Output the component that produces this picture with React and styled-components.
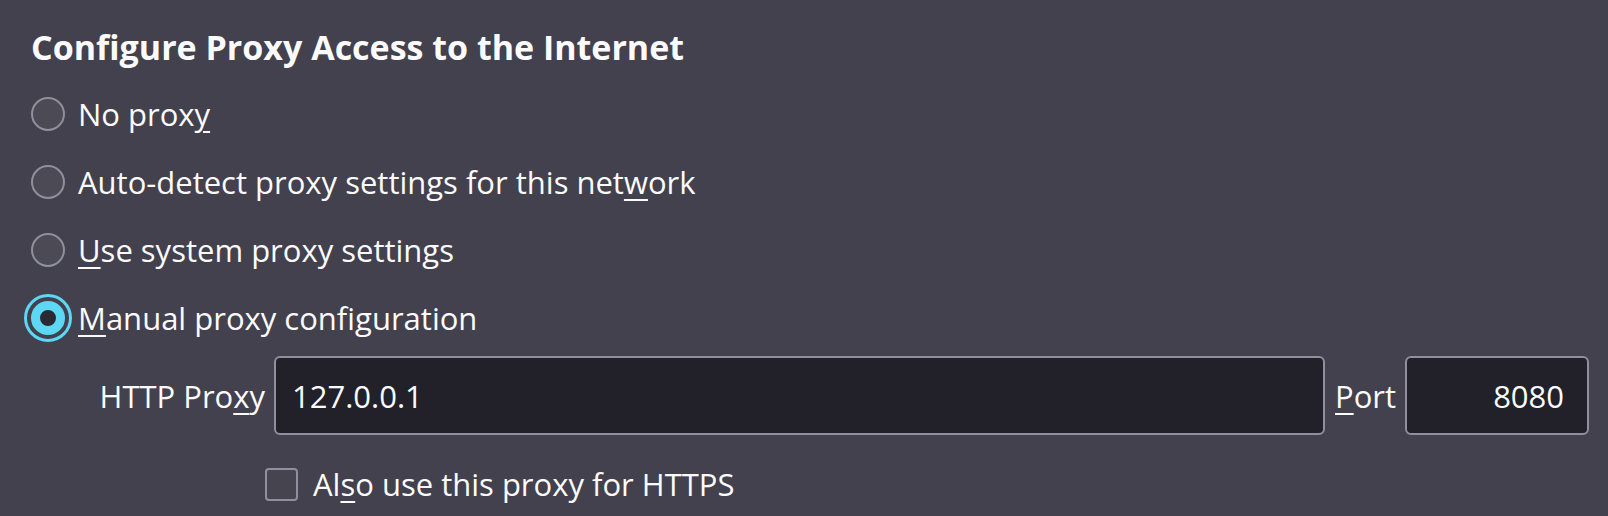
import styled, { createGlobalStyle, css } from "styled-components";

const GlobalStyle = createGlobalStyle`
  html, body {
    margin: 0;
    padding: 0;
    background: #42414d;
  }
  body {
    font-family: "Open Sans", "Noto Sans", sans-serif;
    color: #fbfbfe;
  }
`;

const accent = "#5cd7f4";

const Page = styled.div`
  width: 1608px;
  height: 516px;
  box-sizing: border-box;
  padding: 20px 22px 0 31px;
  background: #42414d;
  overflow: hidden;
`;

const Heading = styled.h1`
  margin: 0;
  height: 60px;
  line-height: 54px;
  font-size: 34px;
  font-weight: 700;
  color: #fbfbfe;
`;

const RadioGroup = styled.div`
  display: flex;
  flex-direction: column;
`;

const RadioRow = styled.label`
  display: flex;
  align-items: center;
  gap: 13px;
  height: 68px;
  font-size: 31px;
`;

const RadioDot = styled.span`
  box-sizing: border-box;
  width: 34px;
  height: 34px;
  flex: none;
  border-radius: 50%;
  border: 2px solid #8f8f9d;
  background: #4b4a55;
  ${(p) =>
    p.$checked &&
    css`
      border: 9px solid ${accent};
      background: #2b2a33;
      outline: 3px solid ${accent};
      outline-offset: 4px;
    `}
`;

const Key = styled.span`
  text-decoration: underline;
  text-decoration-thickness: 2px;
  text-underline-offset: 5px;
`;

const ProxyRow = styled.div`
  display: flex;
  align-items: center;
  margin-top: 4px;
  height: 79px;
  font-size: 31px;
`;

const FieldLabel = styled.span`
  flex: none;
  width: ${(p) => p.$width || "auto"};
  text-align: right;
  margin-right: 9px;
  margin-left: ${(p) => p.$ml || "0"};
`;

const Field = styled.div`
  box-sizing: border-box;
  height: 79px;
  display: flex;
  align-items: center;
  justify-content: ${(p) => (p.$right ? "flex-end" : "flex-start")};
  padding: 0 ${(p) => (p.$right ? "23px" : "20px")} 0 16px;
  width: ${(p) => p.$width};
  flex: none;
  background: #22212a;
  border: 2px solid #8f8f9d;
  border-radius: 6px;
  color: #fbfbfe;
  font-size: 31px;
`;

const CheckRow = styled.label`
  display: flex;
  align-items: center;
  gap: 15px;
  margin-top: 28px;
  padding-left: 234px;
  font-size: 31px;
`;

const CheckBox = styled.span`
  box-sizing: border-box;
  width: 33px;
  height: 33px;
  flex: none;
  border: 2px solid #8f8f9d;
  border-radius: 4px;
  background: #45444f;
`;

export default function App() {
  return (
    <>
      <GlobalStyle />
      <Page>
        <Heading>Configure Proxy Access to the Internet</Heading>
        <RadioGroup>
          <RadioRow>
            <RadioDot />
            <span>
              No prox<Key>y</Key>
            </span>
          </RadioRow>
          <RadioRow>
            <RadioDot />
            <span>
              Auto-detect proxy settings for this net<Key>w</Key>ork
            </span>
          </RadioRow>
          <RadioRow>
            <RadioDot />
            <span>
              <Key>U</Key>se system proxy settings
            </span>
          </RadioRow>
          <RadioRow>
            <RadioDot $checked />
            <span>
              <Key>M</Key>anual proxy configuration
            </span>
          </RadioRow>
        </RadioGroup>
        <ProxyRow>
          <FieldLabel $width="234px">
            HTTP Pro<Key>x</Key>y
          </FieldLabel>
          <Field $width="1051px">127.0.0.1</Field>
          <FieldLabel $ml="10px">
            <Key>P</Key>ort
          </FieldLabel>
          <Field $width="184px" $right>
            8080
          </Field>
        </ProxyRow>
        <CheckRow>
          <CheckBox />
          <span>
            Al<Key>s</Key>o use this proxy for HTTPS
          </span>
        </CheckRow>
      </Page>
    </>
  );
}
